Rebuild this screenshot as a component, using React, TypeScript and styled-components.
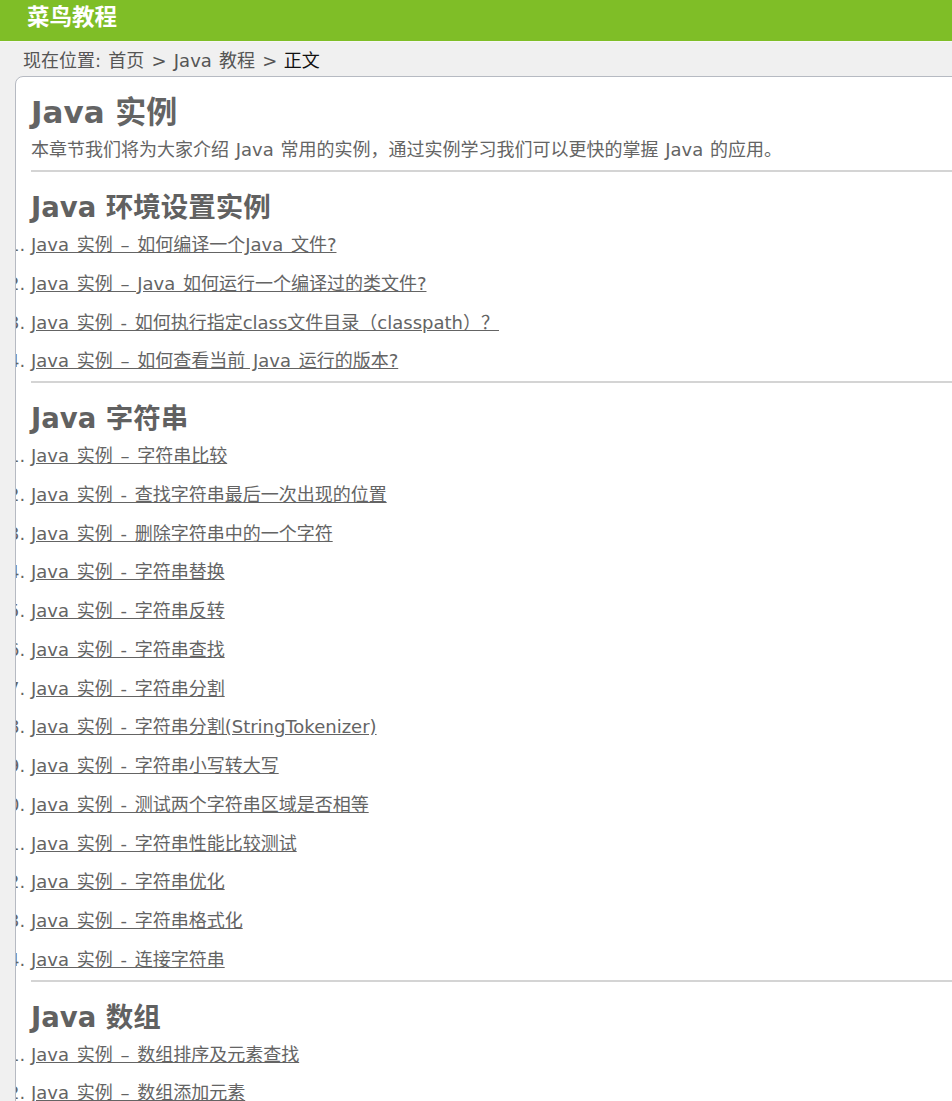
import styled, { createGlobalStyle } from 'styled-components';

const GlobalStyle = createGlobalStyle`
  html, body {
    margin: 0;
    padding: 0;
    background: #f0f0f0;
    overflow-x: hidden;
    font-family: 'DejaVu Sans', 'Noto Sans CJK SC', sans-serif;
  }
`;

const Header = styled.header`
  height: 42px;
  background: #7fbe27;
  border-bottom: 1px solid #f6f6f6;
  box-sizing: border-box;
  padding-left: 27px;
  display: flex;
  align-items: center;
`;

const Logo = styled.h1`
  margin: 0 0 8px;
  font-size: 22.5px;
  font-weight: bold;
  color: #fff;
  line-height: 28px;
`;

const Breadcrumb = styled.div`
  height: 34px;
  padding-left: 23px;
  display: flex;
  align-items: center;
  font-size: 18px;
  word-spacing: 1.5px;
  color: #555;
  span {
    color: #111;
    margin-left: 0.35em;
  }
`;

const Card = styled.main`
  margin-left: 15px;
  margin-right: -30px;
  background: #fff;
  border: 1px solid #b6bac2;
  border-radius: 8px 0 0 0;
  padding: 15px 15px 40px;
  overflow: hidden;
  color: #646464;
`;

const Title = styled.h1`
  margin: 0;
  font-size: 31px;
  line-height: 40px;
  font-weight: bold;
`;

const Intro = styled.p`
  margin: 4px 0 6px;
  font-size: 18px;
  line-height: 28px;
  word-spacing: 1px;
`;

const Rule = styled.hr`
  margin: 0;
  border: 0;
  height: 2px;
  background: #d4d4d4;
`;

const SectionTitle = styled.h2`
  margin: 16px 0 0;
  font-size: 27.5px;
  line-height: 38px;
  font-weight: bold;
  color: #616161;
`;

const List = styled.ol`
  margin: 0;
  padding: 0;
  list-style: decimal outside;
  font-size: 18px;
  line-height: 38.75px;
  li::marker {
    color: #646464;
  }
  a {
    color: #646464;
    text-decoration: underline;
    word-spacing: 2px;
  }
`;

const sections = [
  {
    title: 'Java 环境设置实例',
    items: [
      'Java 实例 – 如何编译一个Java 文件? ',
      'Java 实例 – Java 如何运行一个编译过的类文件?',
      'Java 实例 - 如何执行指定class文件目录（classpath）？ ',
      'Java 实例 – 如何查看当前 Java 运行的版本?',
    ],
  },
  {
    title: 'Java 字符串',
    items: [
      'Java 实例 – 字符串比较',
      'Java 实例 - 查找字符串最后一次出现的位置',
      'Java 实例 - 删除字符串中的一个字符',
      'Java 实例 - 字符串替换',
      'Java 实例 - 字符串反转',
      'Java 实例 - 字符串查找',
      'Java 实例 - 字符串分割',
      'Java 实例 - 字符串分割(StringTokenizer)',
      'Java 实例 - 字符串小写转大写',
      'Java 实例 - 测试两个字符串区域是否相等',
      'Java 实例 - 字符串性能比较测试',
      'Java 实例 - 字符串优化',
      'Java 实例 - 字符串格式化',
      'Java 实例 - 连接字符串',
    ],
  },
  {
    title: 'Java 数组',
    items: ['Java 实例 – 数组排序及元素查找', 'Java 实例 – 数组添加元素'],
  },
];

const App = () => {
  return (
    <>
      <GlobalStyle />
      <Header>
        <Logo>菜鸟教程</Logo>
      </Header>
      <Breadcrumb>
        现在位置: 首页 &gt; Java 教程 &gt;<span>正文</span>
      </Breadcrumb>
      <Card>
        <Title>Java 实例</Title>
        <Intro>本章节我们将为大家介绍 Java 常用的实例，通过实例学习我们可以更快的掌握 Java 的应用。</Intro>
        {sections.map((s) => (
          <section key={s.title}>
            <Rule />
            <SectionTitle>{s.title}</SectionTitle>
            <List>
              {s.items.map((item) => (
                <li key={item}>
                  <a href="#">{item}</a>
                </li>
              ))}
            </List>
          </section>
        ))}
      </Card>
    </>
  );
};

export default App;
